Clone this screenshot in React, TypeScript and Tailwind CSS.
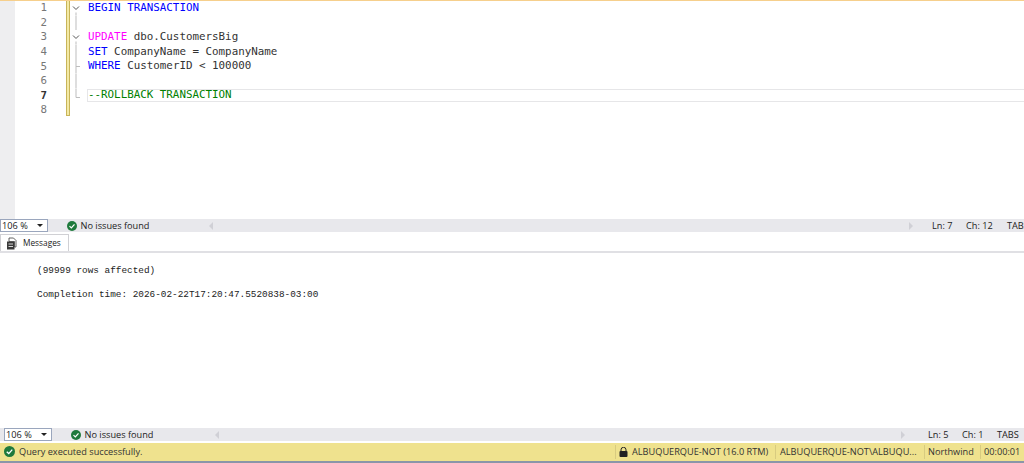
import React from "react";

const Check = ({ size = 10 }: { size?: number }) => (
  <svg width={size} height={size} viewBox="0 0 12 12" className="shrink-0">
    <circle cx="6" cy="6" r="6" fill="#1f7a3d" />
    <path d="M3 6.2 5.2 8.3 9 4" fill="none" stroke="#fff" strokeWidth="1.5" />
  </svg>
);

type Seg = [string, string];
const B = "text-[#0000ff]";
const K = "text-[#333333]";
const lines: { segs: Seg[]; fold: "open" | "line" | "tick" | "end" | "stop" | "none" }[] = [
  { segs: [[B, "BEGIN TRANSACTION"]], fold: "open" },
  { segs: [], fold: "stop" },
  { segs: [["text-[#ff00ff]", "UPDATE"], [K, " dbo.CustomersBig"]], fold: "open" },
  { segs: [[B, "SET"], [K, " CompanyName = CompanyName"]], fold: "line" },
  { segs: [[B, "WHERE"], [K, " CustomerID < 100000"]], fold: "tick" },
  { segs: [], fold: "line" },
  { segs: [["text-[#008000]", "--ROLLBACK TRANSACTION"]], fold: "end" },
  { segs: [], fold: "none" },
];

const Fold = ({ kind }: { kind: string }) => (
  <svg width="17" height="14.6" viewBox="0 0 17 14.6" className="shrink-0">
    {kind === "open" && (
      <>
        <path d="M3 5.5 6 8.5 9 5.5" fill="none" stroke="#555" strokeWidth="1" />
        <path d="M6 11.5V14.6" stroke="#bdbdbd" strokeWidth="1" />
      </>
    )}
    {kind === "stop" && <path d="M6 0V14" stroke="#bdbdbd" strokeWidth="1" />}
    {kind === "line" && <path d="M6 0V14.6" stroke="#bdbdbd" strokeWidth="1" />}
    {kind === "tick" && <path d="M6 0V14.6M6 7.5H10" fill="none" stroke="#bdbdbd" strokeWidth="1" />}
    {kind === "end" && <path d="M6 0V8.500H10" fill="none" stroke="#bdbdbd" strokeWidth="1" />}
  </svg>
);

const StatusStrip = ({
  boxClass,
  ln,
  ch,
  leftClass,
  rightClass,
  chClass,
}: {
  boxClass: string;
  ln: string;
  ch: string;
  leftClass: string;
  rightClass: string;
  chClass: string;
}) => (
  <div className="flex h-[13px] shrink-0 items-center bg-[#e8e8ec] text-[9.2px] text-[#222]">
    <div className={`${boxClass} flex h-[13px] w-[48px] shrink-0 items-center justify-between border border-[#9aa6bd] bg-white pl-[1px] pr-[4px]`}>
      <span>106 %</span>
      <span className="h-0 w-0 border-x-[3px] border-t-[3px] border-x-transparent border-t-[#222]" />
    </div>
    <div className="ml-[19px] flex items-center gap-[3.5px]">
      <Check size={10} />
      <span>No issues found</span>
    </div>
    <div className={`${leftClass} flex min-w-0 flex-1 items-center justify-between`}>
      <span className="h-0 w-0 border-y-[4px] border-r-[4px] border-y-transparent border-r-[#d0d0d6]" />
      <span className="h-0 w-0 border-y-[4px] border-l-[4px] border-y-transparent border-l-[#d0d0d6]" />
    </div>
    <div className={`${rightClass} flex shrink-0 items-center`}>
      <span className="w-[34px]">{ln}</span>
      <span className={chClass}>{ch}</span>
      <span className="w-[20px] whitespace-nowrap">TABS</span>
    </div>
  </div>
);

export default function App() {
  return (
    <div className="flex h-[463px] w-[1024px] flex-col overflow-hidden bg-white font-['Open_Sans','Liberation_Sans',sans-serif]">
      <div className="flex h-[219px] shrink-0 border-t border-[#f6cf8c]">
        <div className="w-[15px] shrink-0 bg-[#eeeef0]" />
        <div className="flex-1">
          {lines.map((l, i) => (
            <div key={i} className="flex h-[14.6px] items-center">
              <div className={`w-[32px] shrink-0 text-right font-['DejaVu_Sans_Mono',monospace] text-[10.8px] ${i === 6 ? "font-bold text-[#333]" : "text-[#777]"}`}>
                {i + 1}
              </div>
              <div className={`ml-[19px] ${i === 7 ? "h-[13px] self-start border-b" : "h-full"} w-[4px] shrink-0 border-x border-[#c8b458] bg-[#f3e9a4]`} />
              <Fold kind={l.fold} />
              <div className={`flex-1 self-start whitespace-pre pl-[1px] font-['DejaVu_Sans_Mono',monospace] text-[10.85px] ${i === 6 ? "h-[13.4px] leading-[11.5px] shadow-[inset_0_1px_0_#e6e6e8,inset_0_-1px_0_#e6e6e8,inset_1px_0_0_#e6e6e8]" : "h-[14.6px] leading-[14.6px]"}`}>
                {l.segs.map((s, j) => (
                  <span key={j} className={s[0]}>{s[1]}</span>
                ))}
              </div>
            </div>
          ))}
        </div>
      </div>
      <StatusStrip boxClass="" chClass="w-[41px]" ln="Ln: 7" ch="Ch: 12" leftClass="ml-[60px]" rightClass="-mr-[3px] ml-[19px]" />
      <div className="flex h-[21px] shrink-0 items-end border-b-2 border-[#e0e0e4]">
        <div className="flex h-[17px] w-[69px] items-center gap-[6px] border border-b-0 border-[#d0d0d4] bg-white pl-[5px] text-[8.3px] text-[#222]">
          <svg width="11" height="13" viewBox="0 0 11 13" className="shrink-0">
            <path d="M1 4.500h7.500V12.500H1z" fill="#3a3a3a" />
            <path d="M3 1h4.500l2.500 2.500V10H8.500V4.500H3z" fill="#fff" stroke="#3a3a3a" strokeWidth=".8" />
            <path d="M2.500 7h4.500M2.500 9.500h4.500" stroke="#fff" strokeWidth=".8" />
          </svg>
          <span>Messages</span>
        </div>
      </div>
      <div className="min-h-0 flex-1 pl-[37px] pt-[12px] font-['Liberation_Mono',monospace] text-[9.4px] leading-[12px] text-[#222]">
        <div className="h-[24px] whitespace-pre">(99999 rows affected)</div>
        <div className="whitespace-pre">Completion time: 2026-02-22T17:20:47.5520838-03:00</div>
      </div>
      <StatusStrip boxClass="ml-[4px]" chClass="w-[35px]" ln="Ln: 5" ch="Ch: 1" leftClass="ml-[62px]" rightClass="mr-[7px] ml-[23px]" />
      <div className="h-[2px] shrink-0" />
      <div className="flex h-[20px] shrink-0 items-center border-b-2 border-[#8a96a8] bg-[#efe28e] text-[9.2px] text-[#333]">
        <div className="ml-[4px] flex items-center gap-[4px]">
          <Check size={11} />
          <span>Query executed successfully.</span>
        </div>
        <div className="ml-auto flex items-center">
          <div className="flex w-[160px] items-center gap-[4px] border-l border-[#d8cb80] pl-[3px]">
            <svg width="9" height="10" viewBox="0 0 9 10" className="shrink-0">
              <path d="M2 4V2.800a2.500 2.500 0 0 1 5 0V4" fill="none" stroke="#222" />
              <rect x="0.5" y="4" width="8" height="6" rx="1" fill="#222" />
            </svg>
            <span className="whitespace-nowrap">ALBUQUERQUE-NOT (16.0 RTM)</span>
          </div>
          <div className="w-[149px] whitespace-nowrap border-l border-[#d8cb80] pl-[4px]">ALBUQUERQUE-NOT\ALBUQU...</div>
          <div className="w-[56px] border-l border-[#d8cb80] pl-[3px]">Northwind</div>
          <div className="w-[44px] border-l border-[#d8cb80] pl-[3px]">00:00:01</div>
        </div>
      </div>
    </div>
  );
}
